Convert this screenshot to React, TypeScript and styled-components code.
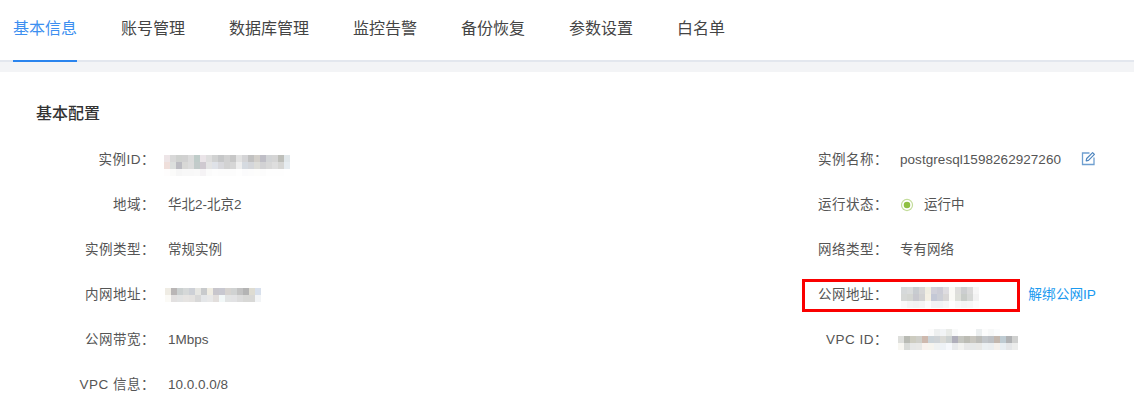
import React from "react";
import styled, { createGlobalStyle } from "styled-components";

const Global = createGlobalStyle`
  html, body { margin: 0; padding: 0; background: #fff; }
  body { font-family: "Liberation Sans", "Noto Sans CJK SC", sans-serif; color: #444; overflow: hidden; }
`;

const Page = styled.div`
  width: 1134px;
  height: 404px;
  overflow: hidden;
`;

const TabBar = styled.nav`
  display: flex;
  gap: 44px;
  height: 60px;
  padding-left: 13px;
  border-bottom: 2px solid #e3e7ee;
`;

const Tab = styled.div<{ $active?: boolean }>`
  height: 62px;
  box-sizing: border-box;
  padding-top: 17px;
  font-size: 16px;
  line-height: 24px;
  color: ${(p) => (p.$active ? "#3d8ff0" : "#444")};
  border-bottom: 2px solid ${(p) => (p.$active ? "#2b85ee" : "transparent")};
`;

const Strip = styled.div`
  height: 10px;
  background: #f3f4f6;
`;

const Content = styled.main`
  padding: 30px 36px 0;
`;

const Title = styled.h2`
  margin: 0 0 11px;
  font-size: 16px;
  line-height: 24px;
  font-weight: 500;
  color: #333;
`;

const Grid = styled.div`
  display: grid;
  grid-template-columns: 733px 329px;
  grid-auto-rows: 45px;
`;

const Row = styled.div`
  position: relative;
  display: flex;
  align-items: center;
  font-size: 13.5px;
  line-height: 20px;
`;

const Label = styled.span`
  flex: none;
  width: 119px;
  text-align: right;
  letter-spacing: 0.5px;
  color: #555;
`;

const Value = styled.span`
  display: flex;
  align-items: center;
  margin-left: 13px;
  color: #555;
  white-space: nowrap;
`;

const RightValue = styled(Value)`
  margin-left: 12px;
`;

const Name = styled.span`
  letter-spacing: 0.05px;
`;

const Action = styled.span`
  margin-left: auto;
  margin-right: 2px;
  font-size: 13.7px;
  color: #1b9af0;
`;

const EditIcon = styled.svg`
  flex: none;
  margin-left: auto;
  margin-top: -2px;
  margin-right: 2px;
`;

const Highlight = styled.div`
  position: absolute;
  left: 33px;
  top: 7px;
  width: 218px;
  height: 33px;
  box-sizing: border-box;
  border: 3px solid #fa0000;
`;

const StatusDot = styled.span`
  flex: none;
  width: 8px;
  height: 8px;
  margin: 0 11px 0 1px;
  border-radius: 50%;
  background: #8fc043;
  border: 2px solid #fff;
  box-shadow: 0 0 0 1.5px #c4dd9c;
  box-sizing: content-box;
  transform: scale(0.82);
`;

const MosaicBox = styled.svg<{ $x: number; $y: number }>`
  display: block;
  flex: none;
  margin-left: ${(p) => p.$x}px;
  margin-top: ${(p) => p.$y}px;
`;

function Mosaic({ rows, cell = 6, rowH = 7, x = 0, y = 0 }: { rows: string[]; cell?: number; rowH?: number; x?: number; y?: number }) {
  const table = rows.map((r) => r.split(" "));
  const cols = Math.max(...table.map((r) => r.length));
  return (
    <MosaicBox $x={x} $y={y} width={cols * cell} height={rows.length * rowH} shapeRendering="crispEdges">
      {table.flatMap((r, i) =>
        r.map((c, j) => <rect key={`${i}-${j}`} x={j * cell} y={i * rowH} width={cell} height={rowH} fill={`#${c}`} />)
      )}
    </MosaicBox>
  );
}

const idMosaic = [
  "ede5e7 d8d8d8 cfd1cf d1d1d1 dbdbdb bfccc9 eae4e8 dedede d1d2d2 c6c7c8 d1d1d1 c7c7c7 e2e2e2 d4d4d6 c1c1c1 d2cfca bfbec6 d2d4d6 d5d5d5 bebfba e1e7ea",
  "efdfdb dcdfdd bcbcc2 d8d8d6 dcdcdc c2cbca cfc9d0 e4e4e4 dfe2e8 d8d8dc d2d2d2 d6d6d6 eeeeee d5dae0 d4d6da dcdcd8 d2d2d4 d8d8d8 dedede d6d6d4 e6ecf0",
  "fefdfd fbfbfa f6f6f6 f8f8f8 f8f8f8 f9f9f9 f5f3f5 fbfbfb fdfdfd fcfcfc fcfcfc fcfcfc fefefe fbfbfc fcfcfc fdfdfc fcfcfc fefefe fefefe fefefe ffffff",
];
const lanMosaic = [
  "efece4 b9b6b6 cbd0d0 d5d8d8 cdd0d6 e6e6e2 c8cacc efece2 c8c6cc c8c8d0 d6d3d0 d0d2d2 c2c2c2 b4b4b4 dedcd2 d8e0ec",
  "fbfaf6 e2e0e0 e2e3e3 e6e4e2 e4e2e0 d8d8d8 e4e6e8 e8e8e8 e2dedc f2f8f8 e2e4e4 e2e2e4 dcdcdc d8d8d6 d8d8d6 f2f4f6",
];
const wanMosaic = [
  "d6d9da dadcdc c8ccd0 d6d6d6 f0eee2 d0d0da ccccd6 dedce0 fafaf6 dededc ccced0 dadada f6f6f6",
  "d6d8d6 d4d6d2 c8c8ce d2d2d2 f4f0e4 c4c8d6 ccced6 d8d6d6 fafaf6 dee0da c8ccc8 d6d8d6 f2f2f2",
  "fafafa f4f4f4 f2f2f2 f4f4f4 fcfcfc f2f2f4 f0f2f4 f6f6f6 fefefe f8f8f8 f4f4f4 f6f6f6 fcfcfc",
];
const vpcMosaic = [
  "ffffff ffffff ffffff ffffff ffffff fbfbfb eef0f0 f2f4f6 e9ebe8 f9fafa ffffff ffffff ffffff eceff0 fcfcfc f7f8f8 fbfcfd ffffff ffffff ffffff",
  "dedfdc b9bbb4 cdccc0 cfcfc9 ceb9ae cbd3d8 cfd3d6 dadad6 cdd2d2 b0afbb c5c6c0 bcbcb4 c8c6bf bcbcb8 c2c6ca bdc0c4 c3b7ae becbd2 b0b2b4 cfd0cf",
  "f8f7f2 d9dbd8 e6e7e6 e8e8e6 f8f2ee f6f4ee f0f2f2 eef2f6 f6f8fc e8eaec f2f2f0 e8e8e8 e6e8e8 e8e8e6 ecf0f2 ebeef0 f4f0ec e8eef2 e4e6e8 ecedec",
];

const tabs = ["基本信息", "账号管理", "数据库管理", "监控告警", "备份恢复", "参数设置", "白名单"];

export default function App() {
  return (
    <Page>
      <Global />
      <TabBar>
        {tabs.map((t, i) => (
          <Tab key={t} $active={i === 0}>{t}</Tab>
        ))}
      </TabBar>
      <Strip />
      <Content>
        <Title>基本配置</Title>
        <Grid>
          <Row>
            <Label>实例ID：</Label>
            <Mosaic rows={idMosaic} x={9} y={12} />
          </Row>
          <Row>
            <Label>实例名称：</Label>
            <RightValue><Name>postgresql1598262927260</Name></RightValue>
            <EditIcon width="15" height="15" viewBox="0 0 15 15" fill="none">
              <path d="M8.5 2H1.5v11.5H13V6.5" stroke="#6f9fd0" strokeWidth="1.3" />
              <path d="M5.2 9.8l.5-2.3L11.6 1.6l1.8 1.8-5.9 5.9z" stroke="#4f86bf" strokeWidth="1.2" strokeLinejoin="round" />
            </EditIcon>
          </Row>
          <Row>
            <Label>地域：</Label>
            <Value>华北2-北京2</Value>
          </Row>
          <Row>
            <Label>运行状态：</Label>
            <RightValue><StatusDot />运行中</RightValue>
          </Row>
          <Row>
            <Label>实例类型：</Label>
            <Value>常规实例</Value>
          </Row>
          <Row>
            <Label>网络类型：</Label>
            <RightValue>专有网络</RightValue>
          </Row>
          <Row>
            <Label>内网地址：</Label>
            <Mosaic rows={lanMosaic} x={10} y={0} />
          </Row>
          <Row>
            <Label>公网地址：</Label>
            <Mosaic rows={wanMosaic} x={13} y={5} />
            <Action>解绑公网IP</Action>
            <Highlight />
          </Row>
          <Row>
            <Label>公网带宽：</Label>
            <Value>1Mbps</Value>
          </Row>
          <Row>
            <Label>VPC ID：</Label>
            <Mosaic rows={vpcMosaic} x={10} y={0} />
          </Row>
          <Row>
            <Label>VPC 信息：</Label>
            <Value>10.0.0.0/8</Value>
          </Row>
        </Grid>
      </Content>
    </Page>
  );
}
